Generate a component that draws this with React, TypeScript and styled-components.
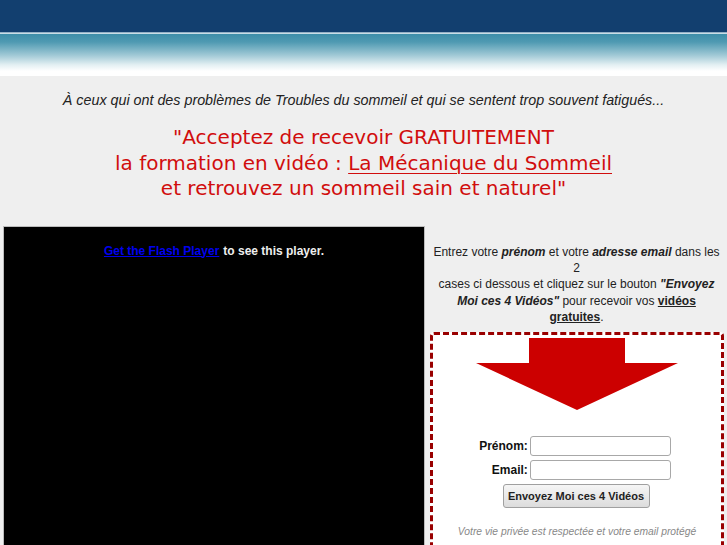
import React from "react";
import styled, { createGlobalStyle } from "styled-components";

const Global = createGlobalStyle`
  html, body { margin: 0; padding: 0; background: #efefef; }
  body { font-family: "Liberation Sans", Arial, sans-serif; overflow: hidden; }
`;

const Page = styled.div`
  width: 727px;
  height: 545px;
  overflow: hidden;
  background: #efefef;
`;

const Header = styled.div`
  height: 76px;
  background: linear-gradient(
    to bottom,
    #123f6f 0px,
    #123f6f 32px,
    #5d83a6 32px,
    #c9dde6 33px,
    #c9dde6 34px,
    #3d8ea9 34px,
    #4f9ab2 42px,
    #9fc8d5 55px,
    #e4f0f3 65px,
    #ffffff 71px,
    #ffffff 76px
  );
`;

const Intro = styled.p`
  margin: 15px 0 0;
  text-align: center;
  font-style: italic;
  font-size: 14.3px;
  letter-spacing: 0;
  color: #222;
  line-height: 18px;
`;

const Headline = styled.h1`
  margin: 16px 0 0;
  text-align: center;
  font-family: "DejaVu Sans", sans-serif;
  font-weight: normal;
  font-size: 20px;
  line-height: 25.5px;
  color: #d10d0d;
`;

const Underlined = styled.span`
  text-decoration: underline;
  text-decoration-thickness: 1px;
  text-underline-offset: 3px;
`;

const Main = styled.div`
  display: flex;
  margin-top: 24px;
  padding-left: 3px;
  gap: 5px;
`;

const Video = styled.div`
  width: 422px;
  height: 330px;
  flex: none;
  background: #000;
  border: 1px solid #bbb;
  border-bottom: none;
  display: flex;
  justify-content: center;
  padding-top: 17px;
  box-sizing: border-box;
  font-size: 12px;
  font-weight: bold;
  color: #eee;
`;

const FlashLink = styled.a`
  color: #0000ee;
  text-decoration: underline;
  margin-right: 4px;
`;

const Side = styled.div`
  width: 297px;
  flex: none;
  display: flex;
  flex-direction: column;
  align-items: stretch;
`;

const Instructions = styled.p`
  margin: 18px 4px 0 0;
  text-align: center;
  font-size: 12px;
  line-height: 16.4px;
  color: #222;
`;

const Strong = styled.b<{ $u?: boolean }>`
  font-style: ${(p) => (p.$u ? "normal" : "italic")};
  text-decoration: ${(p) => (p.$u ? "underline" : "none")};
`;

const Box = styled.div`
  margin-top: 6px;
  margin-right: 3px;
  border: 3px dashed #990000;
  border-radius: 4px;
  background: #fff;
  height: 230px;
  display: flex;
  flex-direction: column;
  align-items: center;
`;

const Arrow = styled.svg`
  margin-top: 3px;
  display: block;
`;

const Form = styled.div`
  margin-top: 26px;
  margin-right: 4px;
  display: grid;
  grid-template-columns: auto auto;
  row-gap: 4px;
  column-gap: 2px;
  align-items: center;
`;

const Label = styled.label`
  text-align: right;
  font-size: 12px;
  font-weight: bold;
  color: #111;
`;

const Input = styled.input`
  width: 141px;
  height: 20px;
  box-sizing: border-box;
  border: 1px solid #a8a8a8;
  border-radius: 3px;
  background: #fff;
  margin: 0;
`;

const Button = styled.button`
  margin-top: 4px;
  margin-right: 2px;
  width: 147px;
  height: 24px;
  border: 1px solid #a0a0a0;
  border-radius: 3px;
  background: linear-gradient(to bottom, #f6f6f6, #dcdcdc);
  font-family: "Liberation Sans", Arial, sans-serif;
  font-size: 11px;
  font-weight: bold;
  color: #222;
  padding: 0;
`;

const Privacy = styled.p`
  margin: 18px 0 0;
  font-size: 10.3px;
  font-style: italic;
  color: #888;
`;

export default function App() {
  return (
    <Page>
      <Global />
      <Header />
      <Intro>
        À ceux qui ont des problèmes de Troubles du sommeil et qui se sentent trop souvent fatigués...
      </Intro>
      <Headline>
        "Acceptez de recevoir GRATUITEMENT
        <br />
        la formation en vidéo : <Underlined>La Mécanique du Sommeil</Underlined>
        <br />
        et retrouvez un sommeil sain et naturel"
      </Headline>
      <Main>
        <Video>
          <span>
            <FlashLink href="#">Get the Flash Player</FlashLink>to see this player.
          </span>
        </Video>
        <Side>
          <Instructions>
            Entrez votre <Strong>prénom</Strong> et votre <Strong>adresse email</Strong> dans les 2
            <br />
            cases ci dessous et cliquez sur le bouton <Strong>"Envoyez Moi ces 4 Vidéos"</Strong> pour
            recevoir vos <Strong $u>vidéos gratuites</Strong>.
          </Instructions>
          <Box>
            <Arrow width="202" height="72" viewBox="0 0 202 72">
              <polygon points="53,0 149,0 149,25 202,25 101,72 0,25 53,25" fill="#cc0000" />
            </Arrow>
            <Form>
              <Label htmlFor="prenom">Prénom:</Label>
              <Input id="prenom" />
              <Label htmlFor="email">Email:</Label>
              <Input id="email" />
            </Form>
            <Button>Envoyez Moi ces 4 Vidéos</Button>
            <Privacy>Votre vie privée est respectée et votre email protégé</Privacy>
          </Box>
        </Side>
      </Main>
    </Page>
  );
}
